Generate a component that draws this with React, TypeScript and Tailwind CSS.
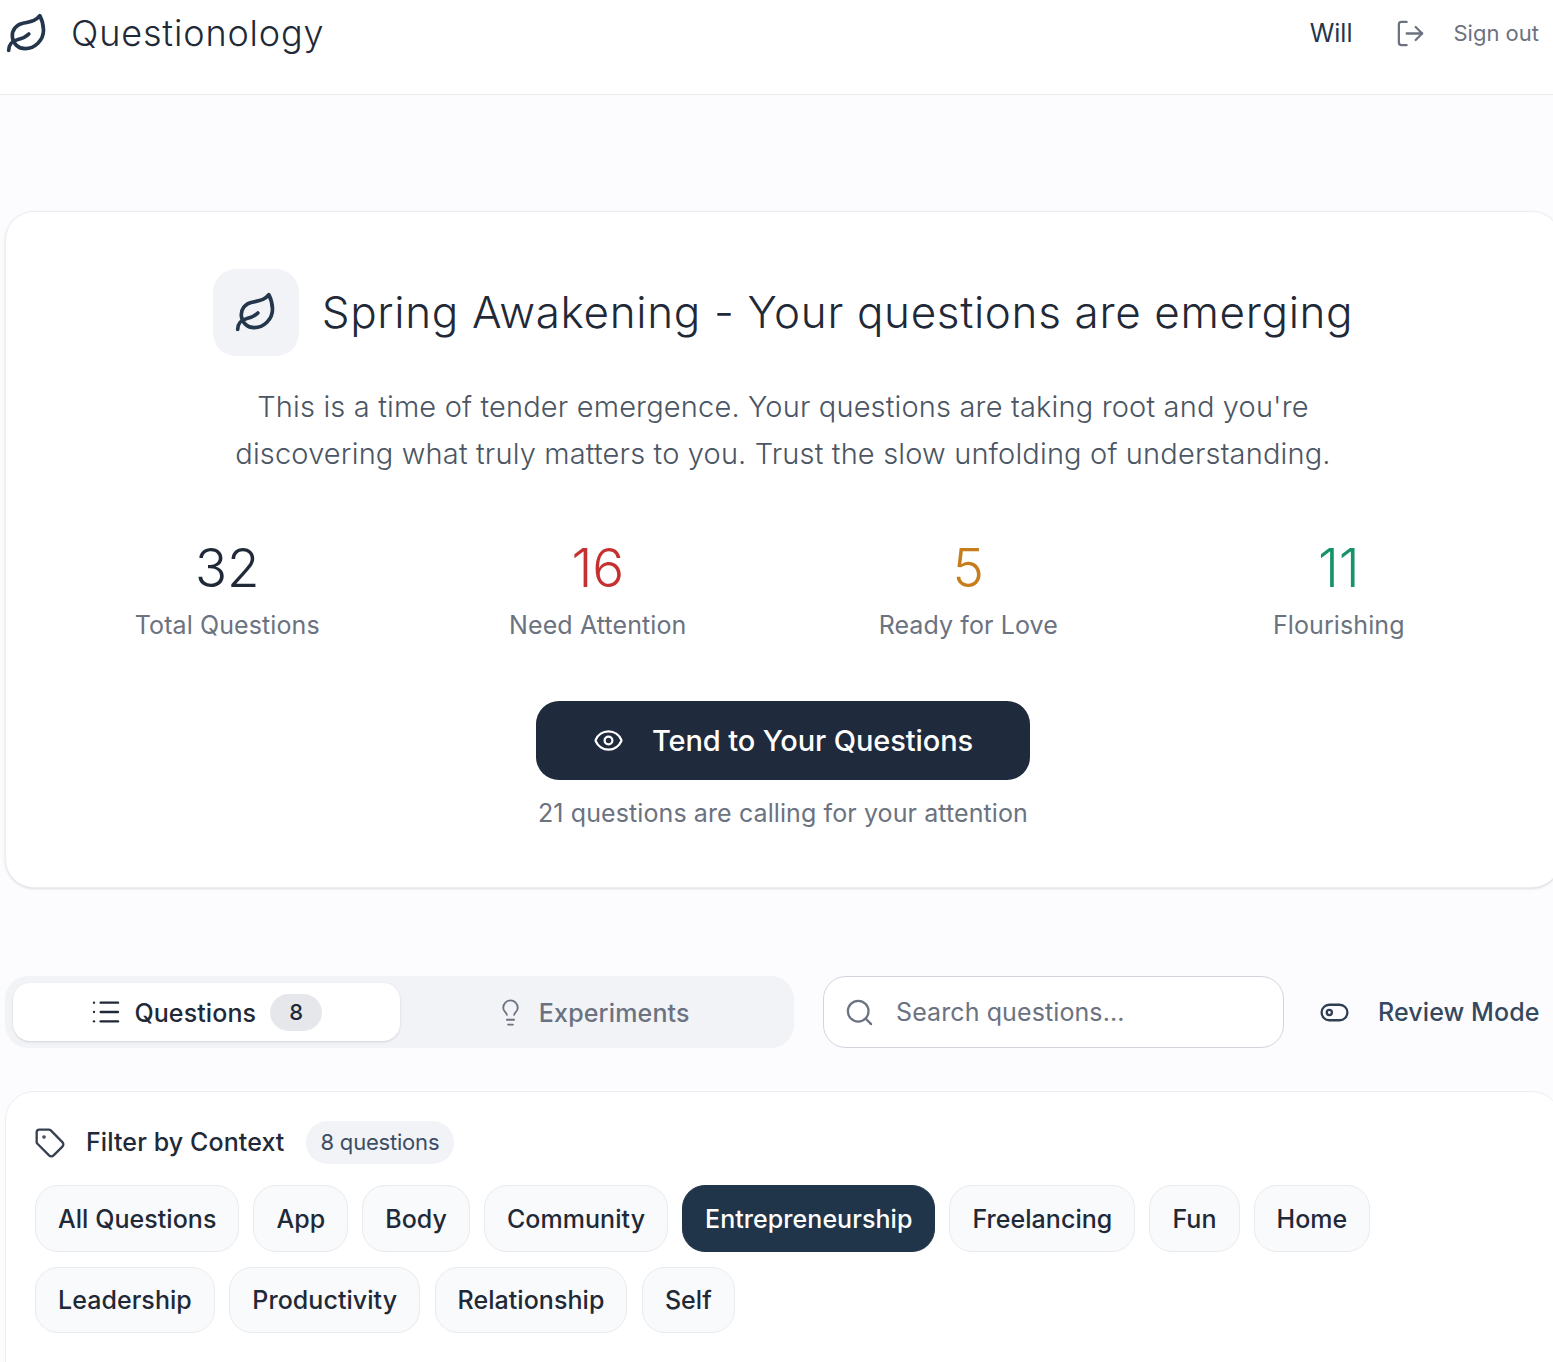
import React from 'react';
import { Eye, Leaf, Lightbulb, List, LogOut, Search, Tag } from 'lucide-react';

const stats = [
  { value: '32', label: 'Total Questions', color: 'text-[#1f2937]' },
  { value: '16', label: 'Need Attention', color: 'text-[#c53030]' },
  { value: '5', label: 'Ready for Love', color: 'text-[#c77d1e]' },
  { value: '11', label: 'Flourishing', color: 'text-[#16936b]' },
];

const firstRow = ['All Questions', 'App', 'Body', 'Community', 'Entrepreneurship', 'Freelancing', 'Fun', 'Home'];
const secondRow = ['Leadership', 'Productivity', 'Relationship', 'Self'];

const Chip: React.FC<{ label: string }> = ({ label }) => {
  const active = label === 'Entrepreneurship';
  return (
    <button
      className={
        active
          ? 'h-full px-[22px] pt-[2px] rounded-[23px] bg-[#203549] border border-[#203549] text-white text-[25px] font-medium tracking-[0.05px]'
          : 'h-full px-[22px] pt-[2px] rounded-[23px] bg-[#f9fafb] border border-[#e8eaee] text-[#1f2937] text-[25px] font-medium tracking-[0.05px]'
      }
    >
      {label}
    </button>
  );
};

const App: React.FC = () => {
  return (
    <div className="w-[1553px] h-[1362px] overflow-hidden bg-[#fcfcfe] font-['Inter',sans-serif]">
      <header className="h-[95px] bg-white border-b border-[#e8e9ed] flex items-start justify-between pl-[5px] pr-[14px]">
        <div className="flex items-center gap-[22px] pt-[10px]">
          <Leaf size={44} strokeWidth={2} className="text-[#24364b]" />
          <h1 className="text-[36px] font-light text-[#1f2937] tracking-[0.85px] leading-[46px] pb-[2px]">Questionology</h1>
        </div>
        <div className="flex items-center pt-[17px]">
          <span className="text-[25px] text-[#24364b] leading-[33px]">Will</span>
          <LogOut size={31} strokeWidth={1.75} className="text-[#6b7280] ml-[43px]" />
          <span className="text-[22px] font-normal text-[#6b7280] ml-[27px]">Sign out</span>
        </div>
      </header>

      <main className="w-[1556px] ml-[5px]">
        <section className="mt-[116px] h-[677px] bg-white rounded-[29px] border border-[#eceef2] shadow-sm flex flex-col items-center pt-[57px]">
          <div className="flex items-center gap-[23px]">
            <div className="w-[86px] h-[87px] rounded-[23px] bg-[#f1f3f6] flex items-center justify-center">
              <Leaf size={44} strokeWidth={2} className="text-[#24364b]" />
            </div>
            <h2 className="text-[44px] font-light text-[#1f2937] tracking-[0.66px] -mt-[2px]">Spring Awakening - Your questions are emerging</h2>
          </div>
          <p className="mt-[27px] text-[29px] leading-[47px] font-light text-[#4b5563] text-center tracking-[0.16px]">
            This is a time of tender emergence. Your questions are taking root and you're
            <br />
            discovering what truly matters to you. Trust the slow unfolding of understanding.
          </p>
          <div className="mt-[56px] w-[1482px] grid grid-cols-4">
            {stats.map((stat) => (
              <div key={stat.label} className="flex flex-col items-center">
                <span className={`text-[53px] leading-[70px] font-light ${stat.color}`}>{stat.value}</span>
                <span className="mt-[4px] text-[25px] leading-[36px] text-[#6b7280] tracking-[0.1px]">{stat.label}</span>
              </div>
            ))}
          </div>
          <button className="mt-[58px] w-[494px] h-[79px] rounded-[23px] bg-[#1f2a3c] text-white flex items-center justify-center gap-[28px] text-[29px] font-medium tracking-[-0.1px]">
            <Eye size={31} strokeWidth={1.75} />
            Tend to Your Questions
          </button>
          <p className="mt-[15px] text-[25px] leading-[36px] text-[#6b7280] tracking-[0.1px]">21 questions are calling for your attention</p>
        </section>

        <div className="mt-[88px] flex items-stretch h-[72px]">
          <div className="w-[789px] rounded-[23px] bg-[#f1f3f6] py-[7px] px-[8px] flex">
            <div className="flex-1 rounded-[17px] bg-white shadow-sm flex items-center justify-center">
              <List size={32} strokeWidth={1.75} className="text-[#1f2937]" />
              <span className="ml-[12px] mt-[4px] text-[25px] font-medium text-[#1f2937] tracking-[0.1px]">Questions</span>
              <span className="ml-[14px] w-[52px] h-[37px] rounded-full bg-[#e5e7eb] flex items-center justify-center text-[22px] font-medium text-[#1f2937]">8</span>
            </div>
            <div className="flex-1 flex items-center justify-center">
              <Lightbulb size={29} strokeWidth={1.5} className="text-[#6b7280]" />
              <span className="ml-[14px] mt-[4px] text-[25px] font-medium text-[#6b7280] tracking-[0.15px]">Experiments</span>
            </div>
          </div>
          <div className="ml-[29px] w-[461px] rounded-[23px] border border-[#d1d5db] bg-white flex items-center pl-[20px]">
            <Search size={31} strokeWidth={1.75} className="text-[#6b7280]" />
            <span className="ml-[21px] mt-[2px] text-[25px] text-[#6b7280] tracking-[0.1px]">Search questions...</span>
          </div>
          <div className="ml-[35px] flex items-center">
            {/* flatter toggle than the lucide one */}
            <svg width="31" height="31" viewBox="0 0 24 24" fill="none" stroke="currentColor" strokeWidth="1.75" className="text-[#2c3e50]">
              <rect x="2" y="6" width="20" height="12" rx="6" />
              <circle cx="8" cy="12" r="2" />
            </svg>
            <span className="ml-[28px] mt-[2px] text-[25px] font-medium text-[#35495e] tracking-[0.1px]">Review Mode</span>
          </div>
        </div>

        <section className="mt-[43px] h-[300px] bg-white rounded-[29px] border border-[#eceef2] pl-[29px] pt-[29px]">
          <div className="flex items-center h-[43px]">
            <Tag size={32} strokeWidth={1.75} className="text-[#374151] -ml-[1px]" />
            <span className="ml-[20px] text-[25px] font-medium text-[#1f2937] tracking-[0.1px]">Filter by Context</span>
            <span className="ml-[22px] h-[43px] pl-[14px] pr-[15px] rounded-full bg-[#f1f3f6] flex items-center text-[22px] text-[#3b4e66] tracking-[-0.2px]">8 questions</span>
          </div>
          <div className="mt-[21px] h-[67px] flex gap-[14px]">
            {firstRow.map((label) => (
              <Chip key={label} label={label} />
            ))}
          </div>
          <div className="mt-[15px] h-[66px] flex gap-[14.5px]">
            {secondRow.map((label) => (
              <Chip key={label} label={label} />
            ))}
          </div>
        </section>
      </main>
    </div>
  );
};

export default App;
